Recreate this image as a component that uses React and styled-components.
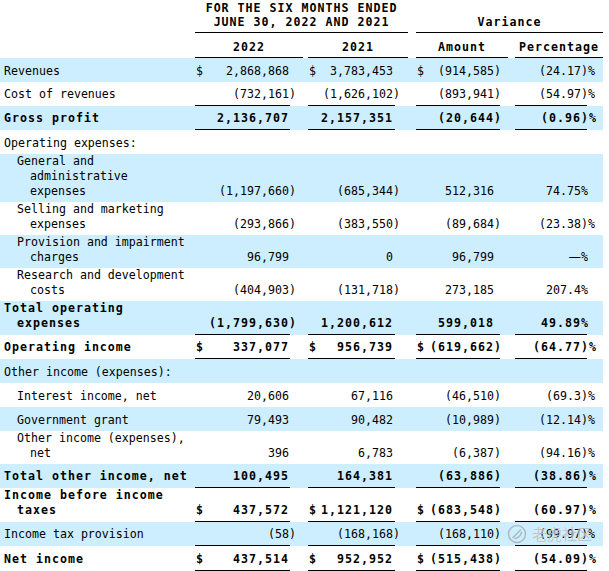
import React from "react";
import styled, { createGlobalStyle } from "styled-components";

const GlobalStyle = createGlobalStyle`
  html, body {
    margin: 0;
    padding: 0;
    background: #fff;
  }
  body {
    font-family: "DejaVu Sans Mono", "Liberation Mono", monospace;
    font-size: 11.628px;
    color: #000;
  }
`;

// label | 2022 num, hang, gap | 2021 num, hang, gap | amount num, hang, gap | pct num, hang
const COLS = [195, 95, 13, 5, 87, 13, 8, 84, 8, 7, 72, 16];
const PAD = [1, 2, 6, 6];

const rows = [
  { label: "Revenues", shade: true, vals: ["$ 2,868,868", "$ 3,783,453", "$ (914,585)", "(24.17)%"] },
  { label: "Cost of revenues", line: 1, vals: ["(732,161)", "(1,626,102)", "(893,941)", "(54.97)%"] },
  { label: "Gross profit", shade: true, bold: true, line: 1, vals: ["2,136,707", "2,157,351", "(20,644)", "(0.96)%"] },
  { label: "Operating expenses:" },
  { label: "General and administrative expenses", level: 1, shade: true, vals: ["(1,197,660)", "(685,344)", "512,316", "74.75%"] },
  { label: "Selling and marketing expenses", level: 1, vals: ["(293,866)", "(383,550)", "(89,684)", "(23.38)%"] },
  { label: "Provision and impairment charges", level: 1, shade: true, vals: ["96,799", "0", "96,799", "—%"] },
  { label: "Research and development costs", level: 1, vals: ["(404,903)", "(131,718)", "273,185", "207.4%"] },
  { label: "Total operating expenses", shade: true, bold: true, line: 1, vals: ["(1,799,630)", "1,200,612", "599,018", "49.89%"] },
  { label: "Operating income", bold: true, line: 1, vals: ["$ 337,077", "$ 956,739", "$ (619,662)", "(64.77)%"] },
  { label: "Other income (expenses):", shade: true },
  { label: "Interest income, net", level: 1, vals: ["20,606", "67,116", "(46,510)", "(69.3)%"] },
  { label: "Government grant", level: 1, shade: true, vals: ["79,493", "90,482", "(10,989)", "(12.14)%"] },
  { label: "Other income (expenses), net", level: 1, vals: ["396", "6,783", "(6,387)", "(94.16)%"] },
  { label: "Total other income, net", shade: true, bold: true, line: 1, vals: ["100,495", "164,381", "(63,886)", "(38.86)%"] },
  { label: "Income before income taxes", bold: true, line: 1, vals: ["$ 437,572", "$ 1,121,120", "$ (683,548)", "(60.97)%"] },
  { label: "Income tax provision", shade: true, line: 1, vals: ["(58)", "(168,168)", "(168,110)", "(99.97)%"] },
  { label: "Net income", bold: true, line: 3, height: 27, vals: ["$ 437,514", "$ 952,952", "$ (515,438)", "(54.09)%"] },
];

function splitValue(raw) {
  let dollar = false;
  let v = raw;
  if (v.startsWith("$ ")) {
    dollar = true;
    v = v.slice(2);
  }
  const m = v.match(/^(.*?)(\)?%?)$/);
  return { dollar, main: m[1], suffix: m[2] };
}

export default function App() {
  return (
    <>
      <GlobalStyle />
      <Page>
        <Sheet>
          <colgroup>
            {COLS.map((w, i) => (
              <Col key={i} $w={w} />
            ))}
          </colgroup>
          <thead>
            <HeadRow $h={33}>
              <Blank />
              <HeadCell colSpan={5} $lh={14} $pb={3}>
                FOR THE SIX MONTHS ENDED
                <br />
                JUNE 30, 2022 AND 2021
              </HeadCell>
              <Blank />
              <HeadCell colSpan={5} $lh={14} $pb={3}>
                Variance
              </HeadCell>
            </HeadRow>
            <HeadRow $h={25}>
              <Blank />
              <HeadCell colSpan={2}>2022</HeadCell>
              <Blank />
              <HeadCell colSpan={2}>2021</HeadCell>
              <Blank />
              <HeadCell colSpan={2}>Amount</HeadCell>
              <Blank />
              <HeadCell colSpan={2}>Percentage</HeadCell>
            </HeadRow>
          </thead>
          <tbody>
            {rows.map((r) => (
              <Row key={r.label} $shade={r.shade} $bold={r.bold} $h={r.height || 24}>
                <Label $level={r.level || 0} $pb={3 + (r.line || 0)}>
                  {r.label}
                </Label>
                {[0, 1, 2, 3].map((i) => {
                  const cells = [];
                  if (r.vals) {
                    const { dollar, main, suffix } = splitValue(r.vals[i]);
                    cells.push(
                      <NumCell key={"n" + i} $pr={PAD[i]} $line={r.line}>
                        <Amt>
                          <span>{dollar ? "$" : ""}</span>
                          <span>
                            {main === "—" ? <Dash>—</Dash> : main}
                            <Hang>{suffix}</Hang>
                          </span>
                        </Amt>
                      </NumCell>
                    );
                  } else {
                    cells.push(<Blank key={"n" + i} />);
                  }
                  cells.push(<Blank key={"f" + i} colSpan={i < 3 ? 2 : 1} />);
                  return cells;
                })}
              </Row>
            ))}
          </tbody>
        </Sheet>
        <Watermark>
          <svg width="20" height="20" viewBox="0 0 20 20">
            <circle cx="10" cy="10" r="8.5" fill="none" stroke="currentColor" strokeWidth="1.6" />
            <path d="M6 13.5 L13.5 6 M8 14.5 C11 14 14 11.5 14.5 8.5" fill="none" stroke="currentColor" strokeWidth="1.6" strokeLinecap="round" />
          </svg>
          <span>老虎社区</span>
        </Watermark>
      </Page>
    </>
  );
}

const Page = styled.div`
  position: relative;
  width: 609px;
`;

const Sheet = styled.table`
  width: 603px;
  table-layout: fixed;
  border-collapse: separate;
  border-spacing: 0;
  font-size: 11.628px;

  td {
    padding: 0;
  }
`;

const Col = styled.col`
  width: ${(p) => p.$w}px;
`;

const HeadRow = styled.tr`
  height: ${(p) => p.$h}px;
`;

const HeadCell = styled.td`
  && {
    padding: 0 0 ${(p) => p.$pb ?? 2}px;
  }
  vertical-align: bottom;
  text-align: center;
  line-height: ${(p) => p.$lh || 15}px;
  font-weight: 700;
  letter-spacing: 1px;
  white-space: nowrap;
  border-bottom: 1px solid #000;
`;

const Blank = styled.td``;

const Row = styled.tr`
  height: ${(p) => p.$h}px;
  background: ${(p) => (p.$shade ? "#cceeff" : "transparent")};
  font-weight: ${(p) => (p.$bold ? 700 : 400)};
  letter-spacing: ${(p) => (p.$bold ? "1px" : "0")};
`;

const Label = styled.td`
  && {
    padding: 0 5px ${(p) => p.$pb}px ${(p) => 4 + 13 * (p.$level + 1)}px;
  }
  text-indent: -13px;
  line-height: 15px;
  vertical-align: bottom;
`;

const NumCell = styled.td`
  && {
    padding: 0 ${(p) => p.$pr}px 3px 1px;
  }
  line-height: 15px;
  vertical-align: bottom;
  border-bottom: ${(p) =>
    p.$line === 3 ? "3px double #000" : p.$line ? "1px solid #000" : "none"};
`;

const Amt = styled.div`
  display: flex;
  justify-content: space-between;
  white-space: nowrap;
`;

const Hang = styled.span`
  display: inline-block;
  width: 0;
  white-space: nowrap;
`;

const Dash = styled.span`
  font-family: "Noto Sans CJK SC", sans-serif;
  font-size: 14px;
  letter-spacing: 0;
`;

const Watermark = styled.div`
  position: absolute;
  left: 507px;
  top: 523px;
  display: flex;
  align-items: center;
  gap: 5px;
  color: rgba(150, 150, 150, 0.55);
  font-family: "Noto Sans CJK SC", sans-serif;
  font-size: 15px;
  letter-spacing: 0;
  pointer-events: none;
  text-shadow: 0 0 1px rgba(255, 255, 255, 0.8);
`;
